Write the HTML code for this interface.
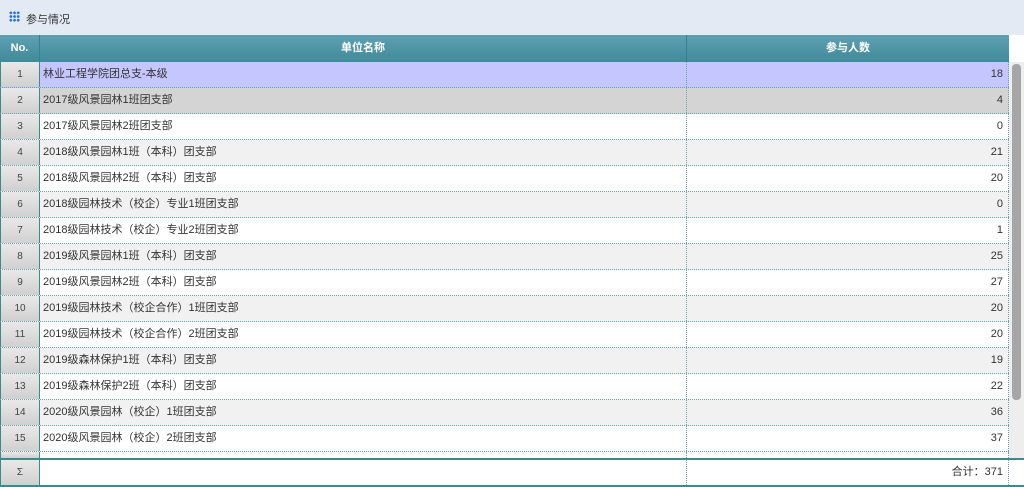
<!DOCTYPE html>
<html><head><meta charset="utf-8"><style>
*{margin:0;padding:0;box-sizing:border-box}
body{width:1024px;height:487px;overflow:hidden;background:#fff;font-family:"Liberation Sans","Noto Sans CJK SC",sans-serif;font-size:11px;color:#333;position:relative}
.top{position:absolute;left:0;top:0;width:1024px;height:35px;background:#e3eaf4}
.top .t{position:absolute;left:26px;top:11px;font-size:11px;color:#333}
.dots{position:absolute;left:9px;top:11px;width:11px;height:11px;background-image:radial-gradient(circle,#2a6fd6 1.2px,transparent 1.5px);background-size:3.7px 3.7px}
.hdr{position:absolute;left:0;top:35px;width:1009px;height:27px;background:linear-gradient(#5fa1b2,#3f8a99);color:#fff;font-weight:bold;font-size:11px}
.hdr div{position:absolute;top:0;height:27px;line-height:27px;text-align:center}
.row{position:absolute;left:0;width:1009px;height:26px;border-bottom:1px dotted #6aa6a6}
.row div{position:absolute;top:0;height:25px;line-height:25px}
.n{left:0;width:40px;text-align:center;background:linear-gradient(#e8e8e8,#d0d0d0);border-left:1px solid #3c8a8a;border-right:1px solid #3c8a8a;font-size:10px;color:#444}
.a{left:40px;width:647px;padding-left:3px;border-right:1px dotted #6aa6a6}
.b{left:687px;width:322px;text-align:right;padding-right:5px;border-right:1px dotted #6aa6a6}
.sb{position:absolute;left:1009px;top:62px;width:15px;height:396px;background:#eeeeee}
.th{position:absolute;left:3px;top:2px;width:9px;height:336px;background:#a6a6a6;border-radius:4px}
.foot{position:absolute;left:0;top:458px;width:1024px;height:29px;border-top:2px solid #3c8a8a;border-bottom:2px solid #3c8a8a}
.foot div{position:absolute;top:0;height:25px;line-height:25px}
</style></head><body>
<div class="top"><div class="dots"></div><div class="t">参与情况</div></div>
<div class="hdr"><div style="left:0;width:40px;border-right:1px solid #3a7f8c">No.</div><div style="left:40px;width:647px;border-right:1px solid #3a7f8c">单位名称</div><div style="left:687px;width:322px">参与人数</div></div>
<div class="row" style="top:62px;background:#c6c6ff"><div class="n">1</div><div class="a">林业工程学院团总支-本级</div><div class="b">18</div></div>
<div class="row" style="top:88px;background:#d4d4d4"><div class="n">2</div><div class="a">2017级风景园林1班团支部</div><div class="b">4</div></div>
<div class="row" style="top:114px"><div class="n">3</div><div class="a">2017级风景园林2班团支部</div><div class="b">0</div></div>
<div class="row" style="top:140px;background:#f1f1f1"><div class="n">4</div><div class="a">2018级风景园林1班（本科）团支部</div><div class="b">21</div></div>
<div class="row" style="top:166px"><div class="n">5</div><div class="a">2018级风景园林2班（本科）团支部</div><div class="b">20</div></div>
<div class="row" style="top:192px;background:#f1f1f1"><div class="n">6</div><div class="a">2018级园林技术（校企）专业1班团支部</div><div class="b">0</div></div>
<div class="row" style="top:218px"><div class="n">7</div><div class="a">2018级园林技术（校企）专业2班团支部</div><div class="b">1</div></div>
<div class="row" style="top:244px;background:#f1f1f1"><div class="n">8</div><div class="a">2019级风景园林1班（本科）团支部</div><div class="b">25</div></div>
<div class="row" style="top:270px"><div class="n">9</div><div class="a">2019级风景园林2班（本科）团支部</div><div class="b">27</div></div>
<div class="row" style="top:296px;background:#f1f1f1"><div class="n">10</div><div class="a">2019级园林技术（校企合作）1班团支部</div><div class="b">20</div></div>
<div class="row" style="top:322px"><div class="n">11</div><div class="a">2019级园林技术（校企合作）2班团支部</div><div class="b">20</div></div>
<div class="row" style="top:348px;background:#f1f1f1"><div class="n">12</div><div class="a">2019级森林保护1班（本科）团支部</div><div class="b">19</div></div>
<div class="row" style="top:374px"><div class="n">13</div><div class="a">2019级森林保护2班（本科）团支部</div><div class="b">22</div></div>
<div class="row" style="top:400px;background:#f1f1f1"><div class="n">14</div><div class="a">2020级风景园林（校企）1班团支部</div><div class="b">36</div></div>
<div class="row" style="top:426px"><div class="n">15</div><div class="a">2020级风景园林（校企）2班团支部</div><div class="b">37</div></div>
<div class="row" style="top:452px;height:6px;border-bottom:none"><div class="n" style="height:6px"></div><div class="a" style="height:6px"></div><div class="b" style="height:6px"></div></div>
<div class="sb"><div class="th"></div></div>
<div class="foot"><div class="n" style="height:25px">Σ</div><div class="a"></div><div class="b">合计：371</div></div>
</body></html>
